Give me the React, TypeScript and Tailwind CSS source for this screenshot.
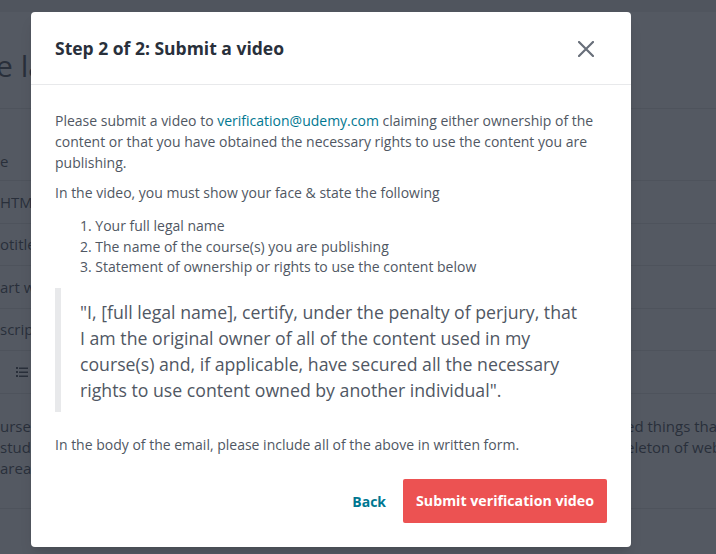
const rows = [
  { h: 'h-[72px]', left: 'e', align: 'items-end pb-[8px]' },
  { h: 'h-[43px]', left: 'HTM', align: 'items-center' },
  { h: 'h-[42px]', left: 'otitle', align: 'items-center' },
  { h: 'h-[43px]', left: 'art w', align: 'items-center' },
  { h: 'h-[42px]', left: 'scrip', align: 'items-center' },
];

function BackgroundPage() {
  return (
    <div className="h-[554px] bg-white text-[#29303b] font-['Open_Sans',sans-serif] overflow-hidden">
      <div className="h-[12px] bg-[#e8e9eb]" />
      <div className="h-[97px] border-b border-[#dedfe0] flex items-center text-[30px] pt-[10px]">
        <span className="-ml-[4px]">e la</span>
      </div>
      {rows.map((r) => (
        <div key={r.left} className={`${r.h} border-b border-[#dedfe0] flex ${r.align} text-[15px]`}>
          <span>{r.left}</span>
        </div>
      ))}
      <div className="h-[43px] border-b border-[#dedfe0] flex items-center pl-[16px]">
        <svg width="12" height="12" viewBox="0 0 12 12" fill="#29303b">
          <rect x="0" y="1" width="2" height="2" />
          <rect x="0" y="5" width="2" height="2" />
          <rect x="0" y="9" width="2" height="2" />
          <rect x="3" y="1.5" width="9" height="1.5" />
          <rect x="3" y="5.5" width="9" height="1.5" />
          <rect x="3" y="9.5" width="9" height="1.5" />
        </svg>
      </div>
      <div className="h-[115px] border-b border-[#dedfe0] flex justify-between pt-[22px] text-[15px] leading-[21px]">
        <div className="flex flex-col">
          <span>urse</span>
          <span>stude</span>
          <span>area c</span>
        </div>
        <div className="flex flex-col w-[90px] whitespace-nowrap overflow-hidden">
          <span>ed things tha</span>
          <span>eleton of web</span>
        </div>
      </div>
    </div>
  );
}

export default function App() {
  return (
    <div className="relative w-[716px] h-[554px] overflow-hidden">
      <BackgroundPage />
      <div className="absolute inset-0 bg-[#29303b]/80" />
      <div className="absolute inset-0 pt-[12px] pl-[31px]">
        <div className="w-[600px] h-[535px] bg-white rounded-[4px] shadow-lg flex flex-col font-['Open_Sans',sans-serif] text-[#505763]">
          <div className="h-[73px] shrink-0 border-b border-[#e8e9eb] flex items-center justify-between pl-[24px] pr-[37px]">
            <h2 className="text-[17.5px] font-bold text-[#29303b]">Step 2 of 2: Submit a video</h2>
            {/* close */}
            <svg width="16" height="16" viewBox="0 0 16 16" className="mt-[2px]">
              <path d="M1 1L15 15M15 1L1 15" stroke="#686f7a" strokeWidth="2.2" strokeLinecap="round" />
            </svg>
          </div>
          <div className="flex-1 px-[24px] pt-[25px] text-[14px] leading-[21px]">
            <p>
              Please submit a video to <span className="text-[#007791]">verification@udemy.com</span> claiming either
              ownership of the content or that you have obtained the necessary rights to use the content you are
              publishing.
            </p>
            <p className="mt-[9px]">In the video, you must show your face &amp; state the following</p>
            <ol className="mt-[13px] pl-[25px] leading-[20.5px]">
              <li>1. Your full legal name</li>
              <li>2. The name of the course(s) you are publishing</li>
              <li>3. Statement of ownership or rights to use the content below</li>
            </ol>
            <blockquote className="mt-[10px] border-l-[6px] border-[#e8e9eb] pl-[19px] pt-[11px] pb-[9px] text-[17.7px] leading-[26px] pr-[28px]">
              "I, [full legal name], certify, under the penalty of perjury, that I am the original owner of all of the
              content used in my course(s) and, if applicable, have secured all the necessary rights to use content
              owned by another individual".
            </blockquote>
            <p className="mt-[22px]">In the body of the email, please include all of the above in written form.</p>
          </div>
          <div className="flex items-center justify-end gap-[17px] px-[24px] pb-[24px]">
            <button className="text-[14px] font-bold text-[#007791]">Back</button>
            <button className="h-[44px] px-[13px] bg-[#ec5252] rounded-[2px] text-white text-[14.2px] font-bold">
              Submit verification video
            </button>
          </div>
        </div>
      </div>
    </div>
  );
}
